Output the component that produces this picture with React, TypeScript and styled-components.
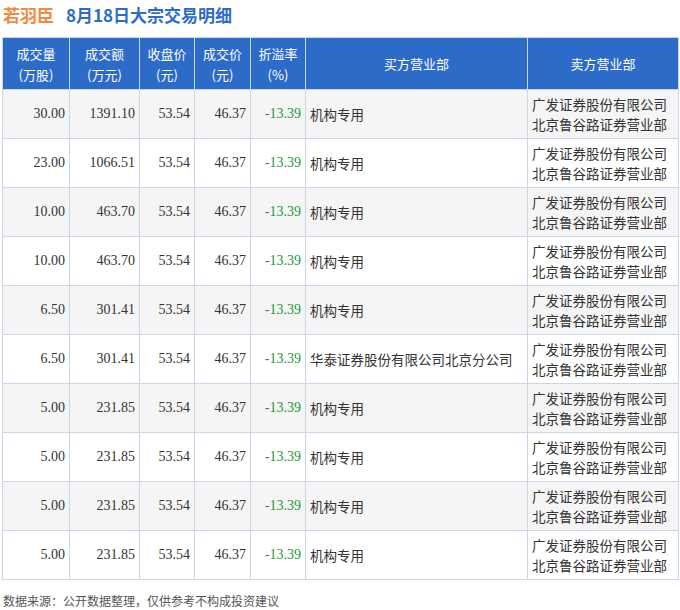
import React from 'react';
import styled, { createGlobalStyle } from 'styled-components';

const Global = createGlobalStyle`
  body { margin: 0; background: #fff; font-family: "Noto Sans CJK SC", "Liberation Sans", sans-serif; }
`;

const Page = styled.div`
  width: 680px;
  height: 610px;
  padding: 0 2px;
  box-sizing: border-box;
  overflow: hidden;
`;

const Title = styled.div`
  height: 29px;
  display: flex;
  align-items: center;
  gap: 12px;
  font-size: 17px;
  font-weight: bold;
  padding-left: 1px;
`;

const Name = styled.span`color: #f08a3e;`;
const Sub = styled.span`color: #2d6bc9;`;

const Table = styled.div`
  display: grid;
  grid-template-columns: 67px 70px 55px 56px 55px 222px 151px;
  border-top: 1px solid #c9d5e8;
  border-left: 1px solid #c9d5e8;
  margin-top: 8px;
`;

const Head = styled.div`
  background: #2d6bc9;
  color: #fff;
  height: 51px;
  display: flex;
  align-items: center;
  justify-content: center;
  text-align: center;
  font-size: 13px;
  line-height: 21px;
  border-right: 1px solid #c9d5e8;
  border-bottom: 1px solid #c9d5e8;
`;

const Cell = styled.div<{ $alt: boolean; $align: string; $green?: boolean }>`
  background: ${p => (p.$alt ? '#f5f5f5' : '#fff')};
  height: 48px;
  display: flex;
  align-items: center;
  justify-content: ${p => p.$align};
  padding: 0 4px;
  font-size: ${p => (p.$align === 'flex-end' ? '14px' : '13.5px')};
  line-height: 20px;
  color: ${p => (p.$green ? '#1a9a3a' : '#333')};
  font-family: ${p => (p.$align === 'flex-end' ? '"Liberation Serif", serif' : 'inherit')};
  border-right: 1px solid #c9d5e8;
  border-bottom: 1px solid #c9d5e8;
`;

const Footer = styled.div`
  font-size: 12px;
  color: #555;
  margin-top: 12px;
  padding-left: 1px;
`;

const heads = ['成交量<br>(万股)', '成交额<br>(万元)', '收盘价<br>(元)', '成交价<br>(元)', '折溢率<br>(%)', '买方营业部', '卖方营业部'];

const rows = [
  ['30.00', '1391.10', '机构专用'],
  ['23.00', '1066.51', '机构专用'],
  ['10.00', '463.70', '机构专用'],
  ['10.00', '463.70', '机构专用'],
  ['6.50', '301.41', '机构专用'],
  ['6.50', '301.41', '华泰证券股份有限公司北京分公司'],
  ['5.00', '231.85', '机构专用'],
  ['5.00', '231.85', '机构专用'],
  ['5.00', '231.85', '机构专用'],
  ['5.00', '231.85', '机构专用'],
];

export default function App() {
  return (
    <Page>
      <Global />
      <Title>
        <Name>若羽臣</Name>
        <Sub>8月18日大宗交易明细</Sub>
      </Title>
      <Table>
        {heads.map(h => (
          <Head key={h}>
            <span>
              {h.split('<br>').map((t, i) => (
                <React.Fragment key={i}>{i > 0 && <br />}{t}</React.Fragment>
              ))}
            </span>
          </Head>
        ))}
        {rows.map((r, i) => {
          const alt = i % 2 === 0;
          return (
            <React.Fragment key={i}>
              <Cell $alt={alt} $align="flex-end">{r[0]}</Cell>
              <Cell $alt={alt} $align="flex-end">{r[1]}</Cell>
              <Cell $alt={alt} $align="flex-end">53.54</Cell>
              <Cell $alt={alt} $align="flex-end">46.37</Cell>
              <Cell $alt={alt} $align="flex-end" $green>-13.39</Cell>
              <Cell $alt={alt} $align="flex-start">{r[2]}</Cell>
              <Cell $alt={alt} $align="flex-start">
                <span>广发证券股份有限公司<br />北京鲁谷路证券营业部</span>
              </Cell>
            </React.Fragment>
          );
        })}
      </Table>
      <Footer>数据来源：公开数据整理，仅供参考不构成投资建议</Footer>
    </Page>
  );
}
